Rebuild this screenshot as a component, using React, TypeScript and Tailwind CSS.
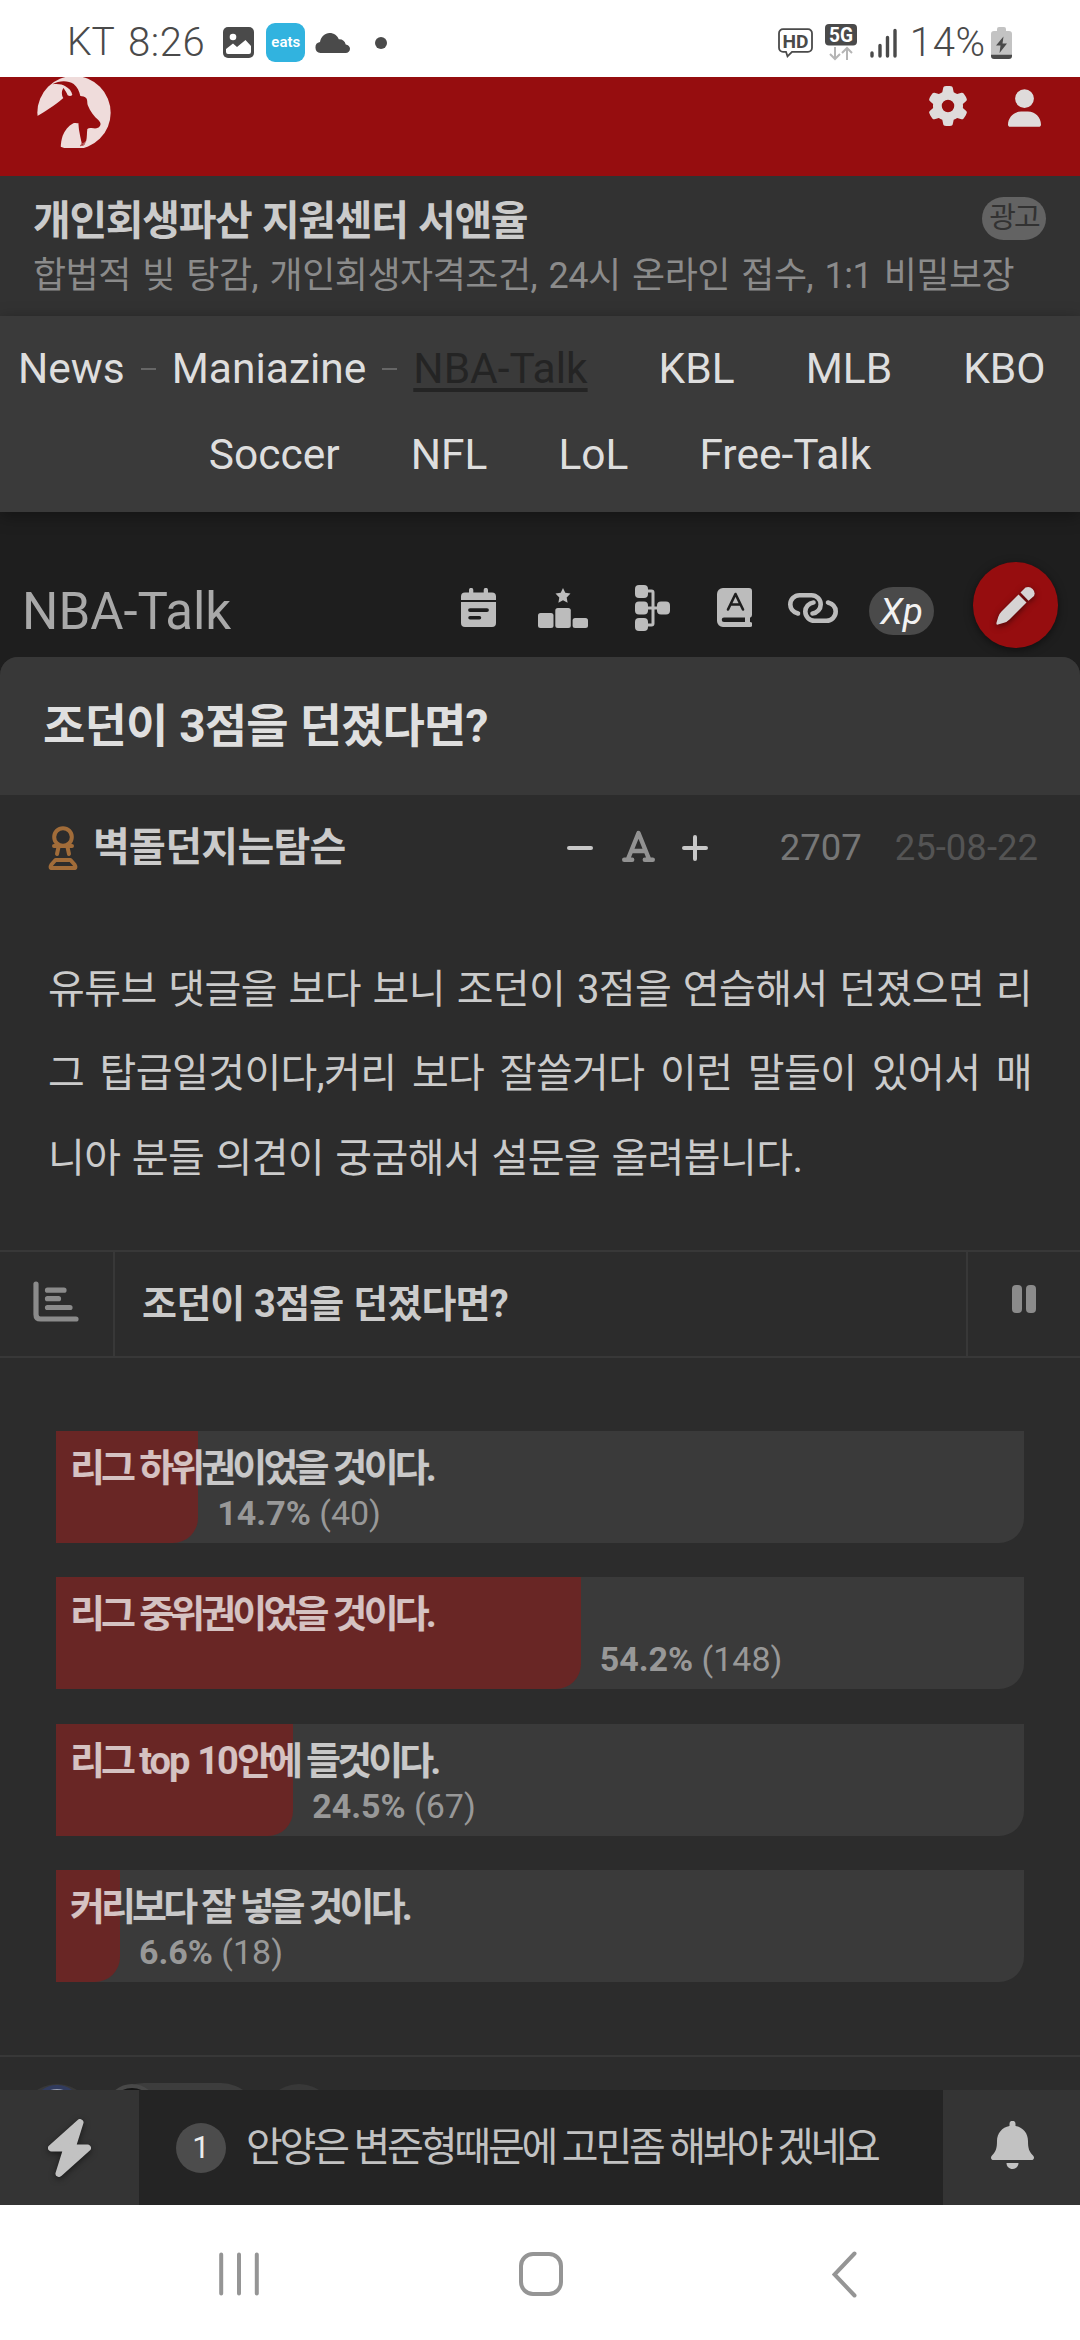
import type React from "react"
import { FaGear, FaUser } from "react-icons/fa6"

interface PollOption {
  id: number
  label: React.ReactNode
  percent: number
  votes: number
}

const pollOptions: PollOption[] = [
  { id: 1, label: "리그 하위권이었을 것이다.", percent: 14.7, votes: 40 },
  { id: 2, label: "리그 중위권이었을 것이다.", percent: 54.2, votes: 148 },
  {
    id: 3,
    label: (
      <>
        리그 <span className="tracking-[-2px]">top 10</span>안에 들것이다.
      </>
    ),
    percent: 24.5,
    votes: 67,
  },
  { id: 4, label: "커리보다 잘 넣을 것이다.", percent: 6.6, votes: 18 },
]

const StatusBar: React.FC = () => (
  <div className="flex h-[77px] items-center bg-white pt-[8px] pl-[67px] pr-[68px] text-[39px] leading-none text-[#4a4a4a]">
    <span className="font-light">KT</span>
    <span className="ml-[13px] text-[40px] font-light tracking-[0.600px]">8:26</span>
    <svg className="ml-[18px] h-[31px] w-[31px] shrink-0" viewBox="0 0 31 31">
      <rect width="31" height="31" rx="5" fill="#4a4a4a" />
      <circle cx="10" cy="10" r="3.3" fill="#fff" />
      <path d="M3 22l7-5.5 4 3.5 8.500-7L28 19v6a2 2 0 0 1-2 2H5a2 2 0 0 1-2-2z" fill="#fff" />
    </svg>
    <span className="ml-[12px] flex h-[39px] w-[39px] shrink-0 items-center justify-center rounded-[9px] bg-[#31b3df] text-[15px] font-semibold text-white">
      eats
    </span>
    <svg className="ml-[10px] h-[20px] w-[35px] shrink-0" viewBox="0 0 35 20" fill="#4a4a4a">
      <path d="M5.500 20a5.500 5.500 0 0 1-.5-10.900C6 3.500 10 0 14.500 0c4.500 0 8 2.500 9.300 6.300 3.700-.2 6.200 1.900 6.900 5.200 2.600.3 4.300 2 4.300 4.300 0 2.500-1.900 4.200-4.300 4.200z" />
    </svg>
    <span className="ml-[25px] h-[12px] w-[12px] shrink-0 rounded-full bg-[#4a4a4a]" />

    <svg className="ml-auto h-[30px] w-[35px] shrink-0" viewBox="0 0 35 30">
      <path
        d="M5 1.200h25a4 4 0 0 1 4 4v14.600a4 4 0 0 1-4 4H14l-4.500 4.500L8 23.800H5a4 4 0 0 1-4-4V5.200a4 4 0 0 1 4-4z"
        fill="none"
        stroke="#4a4a4a"
        strokeWidth="1.800"
      />
      <text x="17.500" y="19.500" textAnchor="middle" fontSize="19" fontWeight="700" textLength="26" lengthAdjust="spacingAndGlyphs" fill="#4a4a4a">
        HD
      </text>
    </svg>
    <svg className="ml-[12px] h-[37px] w-[32px] shrink-0" viewBox="0 0 32 37">
      <rect width="32" height="21.500" rx="4" fill="#4a4a4a" />
      <text x="16" y="17.800" textAnchor="middle" fontSize="20" fontWeight="700" textLength="24" lengthAdjust="spacingAndGlyphs" fill="#fff">
        5G
      </text>
      <path d="M10 23v12M5 30l5 5 5-5M22 36V24M17 29l5-5 5 5" fill="none" stroke="#b5b5b5" strokeWidth="2" />
    </svg>
    <svg className="ml-[13px] h-[30px] w-[27px] shrink-0" viewBox="0 0 27 30" stroke="#4a4a4a" strokeWidth="3.400" strokeLinecap="round">
      <path d="M2 25v3M10 17.500V28M17.500 9.500V28M25 2.500V28" />
    </svg>
    <span className="ml-[13px] text-[40px] font-light tracking-[0.800px]">14%</span>
    <svg className="ml-[5px] h-[32px] w-[21px] shrink-0" viewBox="0 0 21 32">
      <path d="M6 4V2a2 2 0 0 1 2-2h5a2 2 0 0 1 2 2v2h3a3 3 0 0 1 3 3v20H0V7a3 3 0 0 1 3-3z" fill="#c3c3c3" />
      <path d="M0 27.500h21v1.500a3 3 0 0 1-3 3H3a3 3 0 0 1-3-3z" fill="#4a4a4a" />
      <path d="M12.500 9.500L5 18.500h4.500L8.500 26 16 16.500h-4.500z" fill="#4a4a4a" />
    </svg>
  </div>
)

const GoatLogo: React.FC = () => (
  <svg className="h-[71px] w-[74px]" viewBox="37 20 222 213">
    <circle cx="148" cy="127" r="110" fill="#efdcdb" />
    <path
      d="M83 42C104 30 130 30 147 41C158 50 164 62 167 77C173 77 181 79 185 84C189 90 187 97 189 104C197 124 209 139 221 149C229 157 229 163 225 168C223 173 215 175 206 174C198 172 192 172 188 176C186 188 188 200 184 214L178 225L166 228L171 218C168 204 165 190 163 178C162 170 162 166 161 158C156 160 152 157 146 159C131 167 120 181 114 196C110 208 108 220 108 240H30V138L38 137C58 125 88 107 116 83C110 74 110 60 117 53C120 60 127 67 129 75C134 78 139 78 143 74C141 62 133 54 122 48C113 42 100 40 83 42Z"
      fill="#960d0f"
    />
    <path d="M173 218l-3 8M179 216l-4 9M184 212l-4 9" stroke="#efdcdb" strokeWidth="1.500" />
  </svg>
)

const SiteHeader: React.FC = () => (
  <header className="flex h-[99px] items-start bg-[#960d0f] pr-[39px] pl-[37px] text-[#dfdbdb]">
    <GoatLogo />
    <FaGear className="mt-[9px] ml-auto h-[40px] w-[40px]" />
    <FaUser className="mt-[12px] ml-[40px] h-[38px] w-[33px]" />
  </header>
)

const AdBanner: React.FC = () => (
  <div className="h-[140px] bg-[#323232] pt-[17px] pr-[34px] pl-[33px]">
    <div className="flex justify-between">
      <div className="text-[41px] leading-[56px] font-bold tracking-[-1.300px] text-[#cbcbcb] [word-spacing:1.500px]">개인회생파산 지원센터 서앤율</div>
      <span className="mt-[4px] flex h-[43px] w-[64px] items-center justify-center rounded-[22px] bg-[#636363] text-[29px] tracking-[-2px] text-[#323232]">
        광고
      </span>
    </div>
    <div className="text-[36px] leading-[54px] tracking-[-0.500px] whitespace-nowrap text-[#8b8b8b] [word-spacing:3px]">
      합법적 빚 탕감, 개인회생자격조건, 24시 온라인 접수, 1:1 비밀보장
    </div>
  </div>
)

const Dash: React.FC = () => (
  <span className="flex w-[47px] justify-center">
    <span className="h-[2px] w-[15px] bg-[#666]" />
  </span>
)

const Nav: React.FC = () => (
  <nav className="relative h-[196px] bg-[#3a3a3a] pt-[10px] text-[42.500px] leading-[86px] text-[#dedede] shadow-[0_4px_16px_rgba(0,0,0,0.35)]">
    <div className="flex items-center pl-[18px]">
      <span>News</span>
      <Dash />
      <span>Maniazine</span>
      <Dash />
      <span className="text-[#242424] underline decoration-4 underline-offset-[5px] [text-decoration-skip-ink:none]">NBA-Talk</span>
      <span className="ml-[71px]">KBL</span>
      <span className="ml-[71px]">MLB</span>
      <span className="ml-[71px]">KBO</span>
    </div>
    <div className="flex justify-center gap-[71px]">
      <span>Soccer</span>
      <span>NFL</span>
      <span>LoL</span>
      <span>Free-Talk</span>
    </div>
  </nav>
)

const BoardHeader: React.FC = () => (
  <div className="flex h-[145px] items-center pt-[46px] pr-[22px] pl-[22px] text-[#bcbcbc]">
    <h1 className="mt-[8px] text-[51px] leading-none text-[#a9a9a9]">NBA-Talk</h1>
    {/* schedule */}
    <svg className="ml-auto h-[39px] w-[35px]" viewBox="0 0 35 39" fill="currentColor">
      <path d="M8 4.500V2a2 2 0 0 1 4.300 0v2.500h10.400V2A2 2 0 0 1 27 2v2.500h4a4 4 0 0 1 4 4V12H0V8.500a4 4 0 0 1 4-4z" />
      <path
        fillRule="evenodd"
        d="M0 14h35v21a4 4 0 0 1-4 4H4a4 4 0 0 1-4-4zM9 20.200a1.800 1.800 0 0 0 0 3.800h17a1.800 1.800 0 0 0 0-3.800zM9 28a1.700 1.700 0 0 0 0 3.500h9.500a1.700 1.700 0 0 0 0-3.500z"
      />
    </svg>
    {/* ranking */}
    <svg className="ml-[42px] h-[40px] w-[50px]" viewBox="0 0 50 40" fill="currentColor">
      <path d="M25 0l2.300 4.800 5.200.8-3.800 3.800.9 5.300L25 12.200l-4.600 2.500.9-5.300-3.800-3.800 5.200-.8z" />
      <rect y="25" width="15.500" height="15" rx="2.500" />
      <rect x="17.300" y="20" width="15.500" height="20" rx="2.500" />
      <rect x="34.600" y="30" width="15.400" height="10" rx="2.500" />
    </svg>
    {/* bracket */}
    <svg className="ml-[47px] h-[46px] w-[35px]" viewBox="0 0 35 46" fill="currentColor">
      <rect width="13" height="13" rx="4" />
      <rect y="16.500" width="13" height="13" rx="4" />
      <rect y="33" width="13" height="13" rx="4" />
      <rect x="22" y="16.500" width="13" height="13" rx="4" />
      <path d="M12 6h4.500q1.500 0 1.500 1.500v31q0 1.500-1.500 1.500H12M12 23h12" fill="none" stroke="currentColor" strokeWidth="3" />
    </svg>
    {/* dictionary */}
    <svg className="ml-[47px] h-[39px] w-[35px]" viewBox="0 0 35 39">
      <path d="M6 0h26a3 3 0 0 1 3 3v24a3 3 0 0 1-2 2.800V34a2.500 2.500 0 0 1 0 5H6a6 6 0 0 1-6-6V6a6 6 0 0 1 6-6z" fill="currentColor" />
      <path d="M7 29.500h21V34H7a2.200 2.200 0 0 1 0-4.500z" fill="#1e1e1e" />
      <path d="M11 21.500L18.500 6 26 21.500M13.500 16.500h10" fill="none" stroke="#1e1e1e" strokeWidth="2.600" strokeLinecap="round" strokeLinejoin="round" />
    </svg>
    {/* link */}
    <svg className="ml-[36px] h-[30px] w-[50px]" viewBox="0 0 50 30" fill="none" stroke="currentColor" strokeWidth="4.600" strokeLinecap="round">
      <path d="M10 20.500C5 19 2.300 15.500 2.300 11.500a9.200 9.200 0 0 1 9.200-9.200h12a9.200 9.200 0 0 1 9.200 9.200c0 4.500-3.500 8.500-8.200 9" />
      <path d="M40 9.500c5 1.500 7.700 5 7.700 9a9.200 9.200 0 0 1-9.200 9.200h-12a9.200 9.200 0 0 1-9.200-9.200c0-4.500 3.500-8.500 8.200-9" />
    </svg>
    <span className="mt-[7px] ml-[31px] flex h-[48px] w-[65px] items-center justify-center rounded-[24px] bg-[#4a4a4a] text-[37px] leading-none text-[#f2f2f2] italic">
      Xp
    </span>
    <button className="-mt-[6px] ml-[39px] flex h-[86px] w-[85px] items-center justify-center rounded-full bg-[#960d0f] shadow-[0_2px_8px_rgba(0,0,0,0.5)]">
      <svg className="h-[40px] w-[40px] drop-shadow-[0_2px_3px_rgba(0,0,0,0.5)]" viewBox="0 0 40 40" fill="#d6d3d3">
        <path d="M22.500 9.500l8 8L13.500 34.500Q11 37 8 37.800L2 39.600Q0 40 .4 38L2.200 32Q3 29 5.500 26.500z" />
        <path d="M24.500 7.500l5-5a6.500 6.500 0 0 1 8.500 8.500l-5.500 4.700z" />
      </svg>
    </button>
  </div>
)

const PostMeta: React.FC = () => (
  <div className="flex h-[106px] items-center pr-[42px] pl-[48px]">
    <svg className="h-[44px] w-[30px]" viewBox="0 0 30 44" fill="none" stroke="#a16c39" strokeWidth="4" strokeLinecap="round" strokeLinejoin="round">
      <circle cx="15" cy="11" r="8.800" />
      <path d="M6 20h18M10.500 21L9 28M19.500 21L21 28" />
      <path d="M7.500 34h15L26.500 38.500Q28.500 42 26 42H4Q1.500 42 3.500 38.500z" />
    </svg>
    <span className="ml-[15px] text-[40px] font-bold tracking-[-0.700px] text-[#cbcbcb]">벽돌던지는탐슨</span>
    <svg className="ml-auto h-[4px] w-[26px]" viewBox="0 0 26 4">
      <path d="M2 2h22" stroke="#c8c8c8" strokeWidth="4" strokeLinecap="round" />
    </svg>
    <svg className="-mt-[4px] ml-[29px] h-[32px] w-[33px]" viewBox="0 0 33 32" fill="none" stroke="#929292" strokeWidth="4.400" strokeLinecap="round" strokeLinejoin="round">
      <path d="M2.200 29.800h8M22.800 29.800h8M6 29L16.500 3 27 29M10 21h13" />
    </svg>
    <svg className="ml-[27px] h-[26px] w-[26px]" viewBox="0 0 26 26" stroke="#c8c8c8" strokeWidth="4" strokeLinecap="round">
      <path d="M2 13h22M13 2v22" />
    </svg>
    <span className="ml-[72px] text-[36.500px] text-[#777]">2707</span>
    <span className="ml-[33px] text-[36.500px] text-[#545454]">25-08-22</span>
  </div>
)

const Poll: React.FC = () => (
  <section>
    <div className="flex h-[108px] items-stretch border-y-2 border-[#383838]">
      <div className="flex w-[115px] items-center border-r-2 border-[#383838] pl-[33px]">
        <svg className="-mt-[6px] h-[41px] w-[46px]" viewBox="0 0 46 41" fill="none" stroke="#8b8b8b" strokeWidth="5.200" strokeLinecap="round">
          <path d="M3 3v30.500q0 4.500 4.500 4.500H43M14.500 9.200h16.500M14.500 17.700h11M14.500 26.500h22.500" />
        </svg>
      </div>
      <div className="flex flex-1 items-center pl-[27px] text-[38px] font-bold tracking-[-0.800px] text-[#cbcbcb] [word-spacing:1px]">조던이 3점을 던졌다면?</div>
      <div className="flex w-[114px] items-center border-l-2 border-[#383838] pl-[44px]">
        <div className="-mt-[10px] flex gap-[4px]">
          <span className="h-[28px] w-[10px] rounded-[4px] bg-[#8b8b8b]" />
          <span className="h-[28px] w-[10px] rounded-[4px] bg-[#8b8b8b]" />
        </div>
      </div>
    </div>
    <div className="mt-[73px] flex flex-col gap-[34.300px] px-[56px]">
      {pollOptions.map((option) => (
        <div key={option.id} className="relative h-[112px] overflow-hidden rounded-br-[25px] bg-[#3a3a3a]">
          <div className="absolute inset-y-0 left-0 rounded-br-[25px] bg-[#692625]" style={{ width: `${option.percent}%` }} />
          <div className="relative pt-[14px] pl-[14px] text-[38px] leading-[46px] font-bold tracking-[-3.900px] text-white/72 [word-spacing:1.500px]">
            {option.label}
          </div>
          <div className="relative mt-[2px] text-[34px] leading-[40px] text-[#989898]" style={{ paddingLeft: `calc(${option.percent}% + 19px)` }}>
            <span className="font-bold">{option.percent}%</span> ({option.votes})
          </div>
        </div>
      ))}
    </div>
  </section>
)

const BottomBar: React.FC = () => (
  <div className="flex h-[115px] text-[#c2c2c2]">
    <div className="flex w-[139px] items-center bg-[#343434] pl-[48px]">
      <svg className="h-[58px] w-[43px] drop-shadow-[0_2px_3px_rgba(0,0,0,0.5)]" viewBox="0 0 43 58" fill="currentColor" stroke="currentColor" strokeWidth="7" strokeLinejoin="round">
        <path d="M32 3.500L3.500 29h15.500L11 54.500 39.500 29H24z" />
      </svg>
    </div>
    <div className="flex flex-1 items-center bg-[#242424] pl-[37px]">
      <span className="flex h-[50px] w-[50px] items-center justify-center rounded-full bg-[#4c4c4c] text-[31px] leading-none text-[#ececec]">1</span>
      <span className="ml-[20px] text-[40px] tracking-[-3.200px] whitespace-nowrap">안양은 변준형때문에 고민좀 해봐야 겠네요</span>
    </div>
    <div className="flex w-[137px] items-center bg-[#343434] pl-[48px]">
      <svg className="-mt-[6px] h-[48px] w-[43px]" viewBox="0 0 43 48" fill="currentColor">
        <path d="M18.500 5V2.800a3 3 0 0 1 6 0V5C32 6.300 37 12.500 37 20c0 7 1 10.500 5 14.500 2 2 .8 4.500-1.500 4.500h-38C.2 39-1 36.500 1 34.500 5 30.500 6 27 6 20 6 12.500 11 6.300 18.500 5z" />
        <path d="M15.500 42h12c0 3.500-2.700 6-6 6s-6-2.500-6-6z" />
      </svg>
    </div>
  </div>
)

const SystemNav: React.FC = () => (
  <div className="flex h-[135px] items-center bg-white pt-[3px] pl-[219px]">
    <svg className="h-[44px] w-[40px]" viewBox="0 0 40 44" stroke="#959595" strokeWidth="4" strokeLinecap="round">
      <path d="M2.200 2.500v39M20 2.500v39M37.800 2.500v39" />
    </svg>
    <span className="ml-[260px] h-[44px] w-[44px] rounded-[14px] border-4 border-[#959595]" />
    <svg className="ml-[269px] h-[47px] w-[25px]" viewBox="0 0 25 47" fill="none" stroke="#959595" strokeWidth="4" strokeLinecap="round">
      <path d="M22.500 2.500L2.500 23.500l20 21" />
    </svg>
  </div>
)

const App: React.FC = () => {
  return (
    <div className="h-[2340px] w-[1080px] overflow-hidden bg-[#1e1e1e] font-[Roboto,'Noto_Sans_CJK_KR',sans-serif]">
      <StatusBar />
      <SiteHeader />
      <AdBanner />
      <Nav />
      <BoardHeader />
      <main className="h-[1433px] overflow-hidden rounded-t-[18px] bg-[#2c2c2c]">
        <div className="flex h-[138px] items-center bg-[#383838] pl-[43px] text-[46px] font-bold tracking-[-0.800px] text-[#dfdfdf] [word-spacing:1px]">
          조던이 3점을 던졌다면?
        </div>
        <PostMeta />
        <div className="mt-[47px] h-[302px] px-[48px] text-[40px] leading-[84.300px] tracking-[-0.600px] text-[#cbcbcb] [word-spacing:2px]">
          <p className="[text-align-last:justify]">유튜브 댓글을 보다 보니 조던이 3점을 연습해서 던졌으면 리</p>
          <p className="[text-align-last:justify]">그 탑급일것이다,커리 보다 잘쓸거다 이런 말들이 있어서 매</p>
          <p>니아 분들 의견이 궁굼해서 설문을 올려봅니다.</p>
        </div>
        <Poll />
        {/* reaction chips, mostly hidden under the bottom bar */}
        <div className="mt-[73px] flex h-[60px] items-start border-t-2 border-[#383838] pt-[26px] pl-[21px]">
          <span className="mt-px flex h-[72px] w-[72px] shrink-0 justify-center rounded-full bg-[#383838]">
            <span className="mt-px h-[50px] w-[50px] rounded-full border-4 border-[#313b5e] bg-[#9a9fb0]" />
          </span>
          <span className="ml-[13px] h-[76px] w-[153px] shrink-0 rounded-[38px] bg-[#3d3d3d]">
            <span className="mt-px block h-[76px] w-[52px] rounded-full border-[4px] border-[#484848] bg-[#151515]" />
          </span>
          <span className="mt-px ml-[4px] h-[72px] w-[72px] shrink-0 rounded-full bg-[#383838]" />
        </div>
      </main>
      <BottomBar />
      <SystemNav />
    </div>
  )
}

export default App
